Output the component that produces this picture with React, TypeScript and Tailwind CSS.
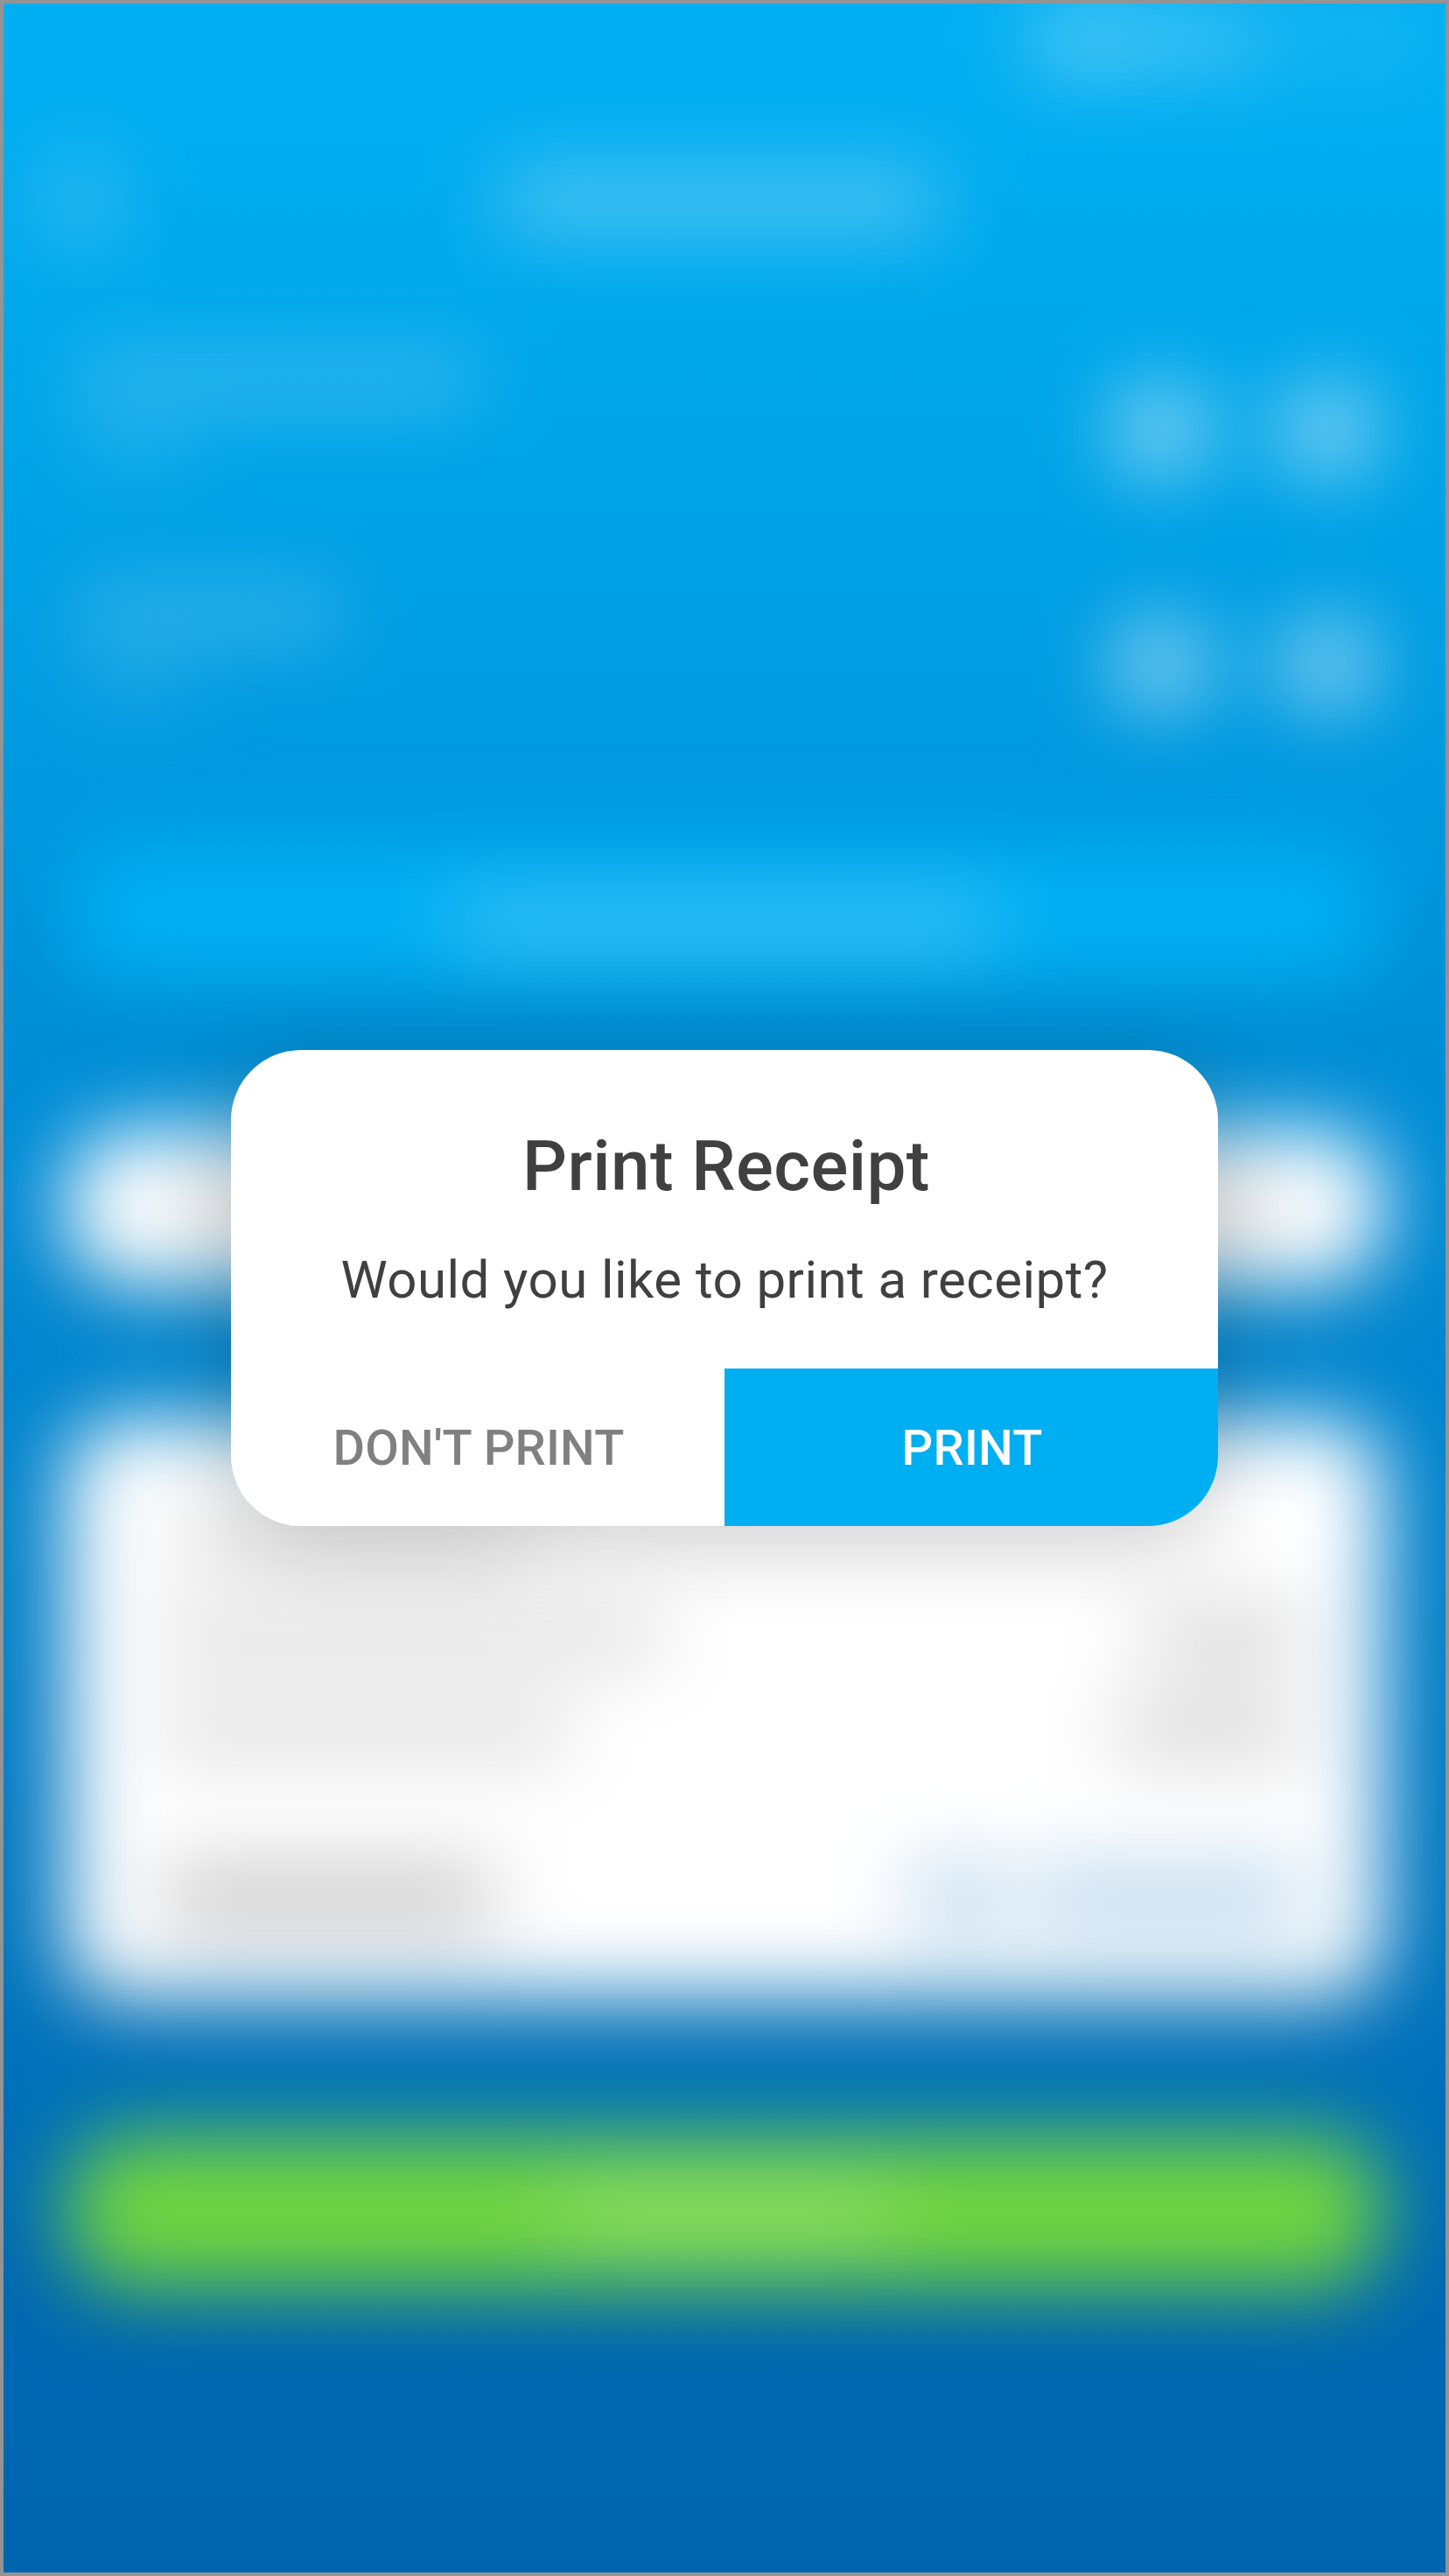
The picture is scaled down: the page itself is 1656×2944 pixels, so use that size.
const items = [
  { name: "w-[456px]", note: "w-[130px]" },
  { name: "w-[300px]", note: "w-[130px]" },
];

const lines = [
  { label: "w-[410px] bg-black/12", amount: "w-0" },
  { label: "w-[570px] bg-black/16", amount: "w-[180px]" },
  { label: "w-[460px] bg-black/16", amount: "w-[215px]" },
];

function Backdrop() {
  return (
    <div className="flex flex-col blur-[46px] [grid-area:1/1]" aria-hidden="true">
      <div className="flex h-24 items-center justify-end gap-5 pr-5 pb-3">
        <div className="h-[68px] w-[120px] rounded-l-full bg-white/40" />
        <div className="-ml-5 h-16 w-[150px] bg-white/30" />
        <div className="h-16 w-[170px] rounded-full bg-white/12" />
      </div>
      <div className="flex h-[258px] items-center">
        <div className="ml-[52px] h-[92px] w-[72px] bg-white/25" />
        <div className="ml-[444px] h-[68px] w-[500px] bg-white/34" />
      </div>
      {items.map((item) => (
        <div key={item.name} className="flex h-[268px] items-center justify-between pr-[83px] pl-[84px]">
          <div className="flex h-[172px] flex-col gap-9">
            <div className={`h-14 bg-white/24 ${item.name}`} />
            <div className={`h-9 bg-white/16 ${item.note}`} />
          </div>
          <div className="flex items-center gap-[14px]">
            <div className="size-[100px] rounded-full bg-white/62" />
            <div className="h-14 w-[66px] bg-white/10" />
            <div className="size-[100px] rounded-full bg-white/62" />
          </div>
        </div>
      ))}
      <div className="mx-[72px] mt-[66px] flex h-44 items-center justify-center rounded-[60px] bg-[#00aff2] pt-3 shadow-[0_24px_48px_rgba(0,0,0,0.18)]">
        <div className="h-14 w-[620px] bg-white/28" />
      </div>
      <div className="mx-[72px] mt-[156px] flex h-44 items-center justify-between rounded-[70px] bg-white px-[120px] shadow-[0_24px_48px_rgba(0,0,0,0.14)]">
        <div className="h-14 w-[300px] bg-black/12" />
        <div className="h-14 w-[200px] bg-black/12" />
      </div>
      <div className="mx-[72px] mt-[156px] flex h-[660px] flex-col justify-between rounded-[60px] bg-white pt-[108px] pr-[90px] pb-[84px] pl-[110px] shadow-[0_24px_48px_rgba(0,0,0,0.12)]">
        <div className="flex flex-col gap-[58px]">
          {lines.map((line) => (
            <div key={line.label} className="flex justify-between">
              <div className={`h-[52px] ${line.label}`} />
              <div className={`h-[52px] bg-black/20 ${line.amount}`} />
            </div>
          ))}
        </div>
        <div className="flex justify-between">
          <div className="h-[62px] w-[376px] bg-black/26" />
          <div className="flex gap-8">
            <div className="h-[62px] w-[106px] bg-[#0068b8]/32" />
            <div className="h-[62px] w-[310px] bg-[#0068b8]/31" />
          </div>
        </div>
      </div>
      <div className="mx-[72px] mt-[156px] flex h-44 items-center justify-center rounded-[70px] bg-[#71d53f] shadow-[0_24px_48px_rgba(0,0,0,0.1)]">
        <div className="h-14 w-[370px] bg-white/26" />
      </div>
    </div>
  );
}

function PrintDialog() {
  return (
    <div
      role="dialog"
      className="z-10 flex h-[544px] w-[1128px] flex-col place-self-center overflow-hidden rounded-[80px] bg-white text-center text-[#404040] shadow-[0_20px_100px_rgba(0,0,0,0.2)] [grid-area:1/1]"
    >
      <div className="flex h-[364px] flex-col items-center pt-[85px]">
        <h1 className="pl-1 text-[80px] leading-[96px] font-medium tracking-[0.4px] whitespace-nowrap">Print Receipt</h1>
        <p className="mt-[46px] text-[60px] leading-[72px] tracking-[0.45px] whitespace-nowrap">Would you like to print a receipt?</p>
      </div>
      <div className="grid h-[180px] grid-cols-2 text-[56px] font-medium tracking-[0.2px]">
        <button className="pt-px pl-0.5 text-[#808080]">DON'T PRINT</button>
        <button className="bg-[#00aff2] pt-px pl-0.5 text-white">PRINT</button>
      </div>
    </div>
  );
}

export default function App() {
  return (
    <main className="grid h-[2944px] w-[1656px] grid-cols-1 overflow-hidden border-4 border-[#949494] bg-[linear-gradient(180deg,#00aff2_0%,#00acef_6%,#00a4e7_18%,#0098de_31%,#008dd6_43%,#0076bf_76%,#006ab4_87%,#0065af_100%)] font-['Roboto',sans-serif]">
      <Backdrop />
      <PrintDialog />
    </main>
  );
}
